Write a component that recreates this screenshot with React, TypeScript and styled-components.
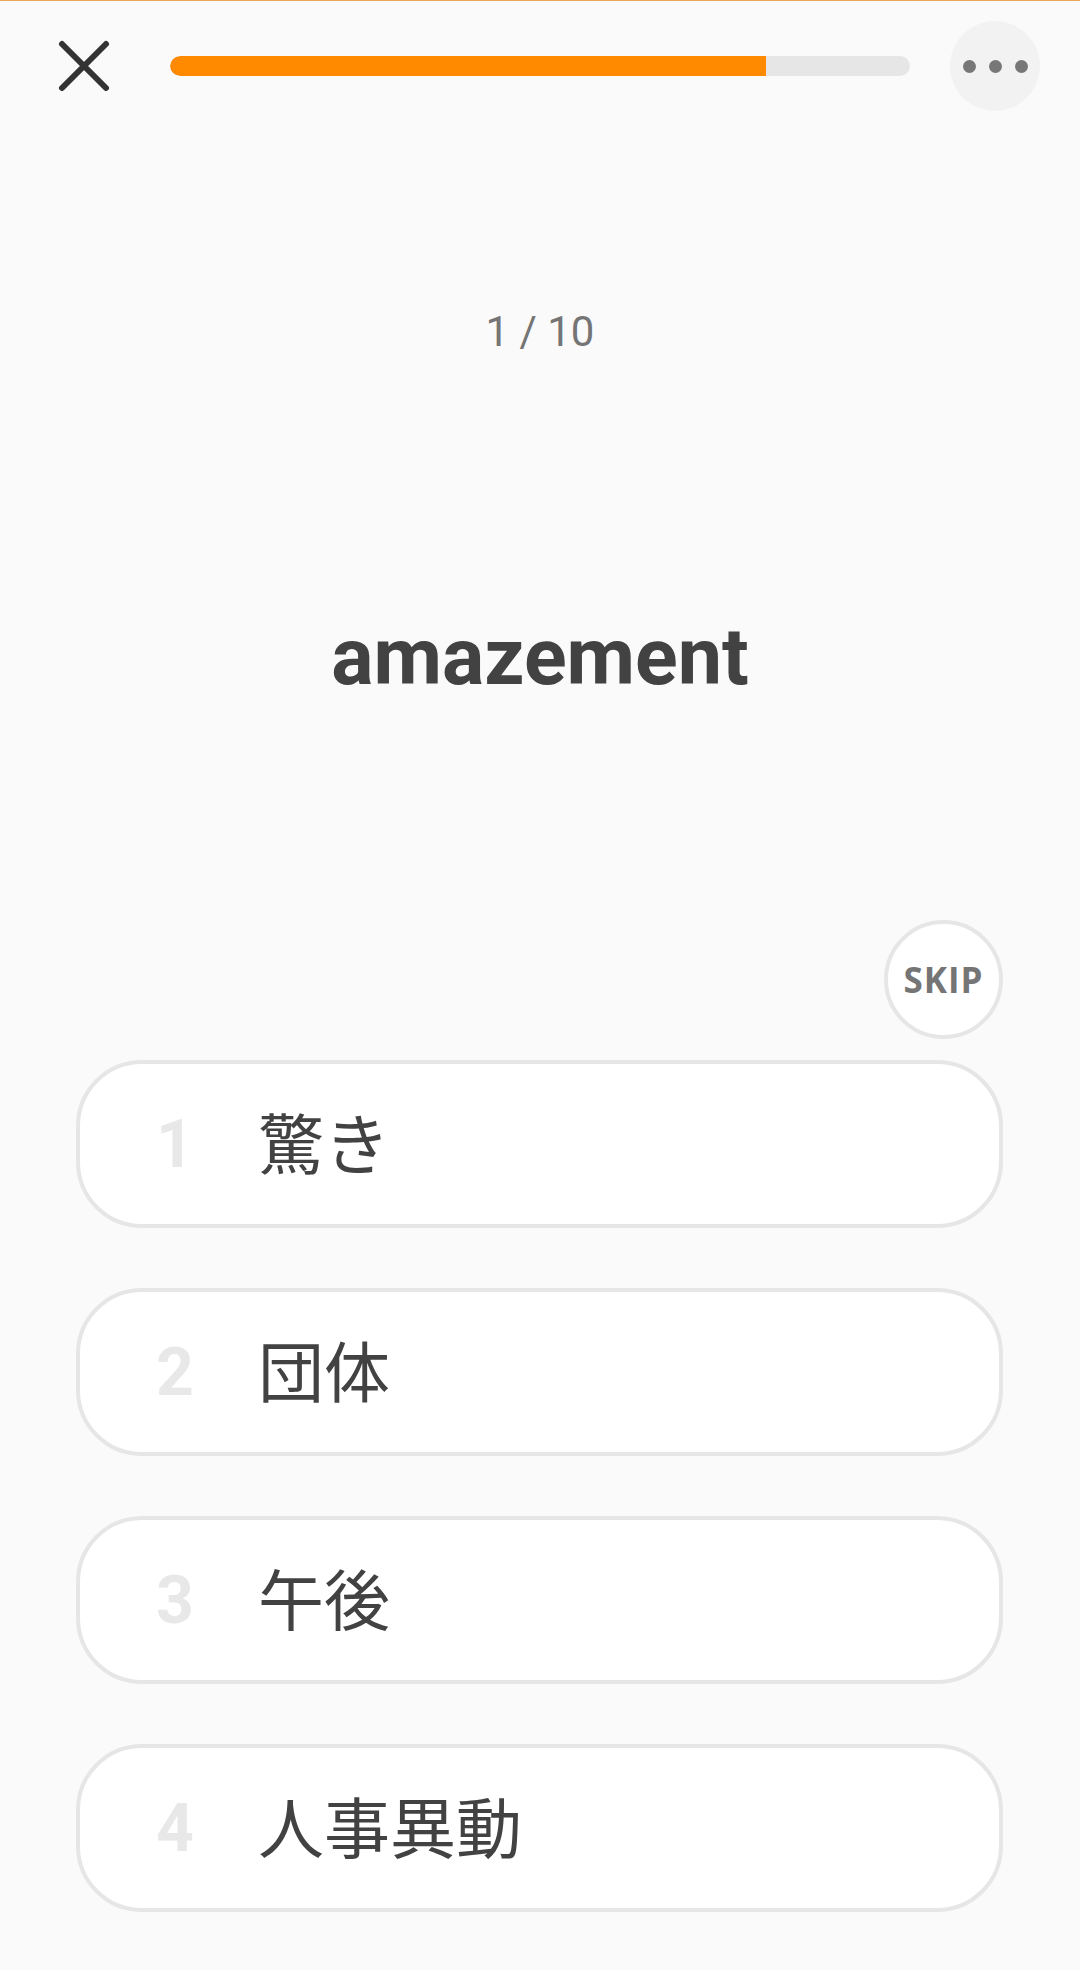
import React from 'react';
import styled, { createGlobalStyle } from 'styled-components';

const GlobalStyle = createGlobalStyle`
  html, body {
    margin: 0;
    padding: 0;
    background: #fafafa;
  }
  * {
    box-sizing: border-box;
  }
`;

const Screen = styled.div`
  width: 1080px;
  min-height: 1970px;
  background: #fafafa;
  border-top: 1px solid #eba65a;
  display: flex;
  flex-direction: column;
  font-family: Roboto, 'Noto Sans', sans-serif;
`;

const TopBar = styled.header`
  display: flex;
  align-items: center;
  padding: 20px 40px 0 58px;
  height: 110px;
`;

const CloseButton = styled.button`
  width: 52px;
  height: 52px;
  padding: 0;
  border: none;
  background: none;
  display: flex;
  align-items: center;
  justify-content: center;
  cursor: pointer;
`;

const Progress = styled.div`
  flex: 1;
  height: 20px;
  margin: 0 40px 0 60px;
  border-radius: 10px;
  background: #e6e6e6;
  overflow: hidden;
`;

const ProgressFill = styled.div`
  height: 100%;
  background: #ff8a00;
  border-radius: 10px 0 0 10px;
`;

const MoreButton = styled.button`
  width: 90px;
  height: 90px;
  border-radius: 50%;
  border: none;
  background: #f2f2f2;
  display: flex;
  align-items: center;
  justify-content: center;
  gap: 13px;
  padding: 0;
`;

const Dot = styled.span`
  width: 13px;
  height: 13px;
  border-radius: 50%;
  background: #777777;
`;

const Counter = styled.div`
  margin-top: 196px;
  text-align: center;
  font-size: 42px;
  line-height: 50px;
  color: #757575;
`;

const Word = styled.h1`
  margin: 254px 0 0;
  text-align: center;
  font-size: 79px;
  line-height: 92px;
  font-weight: 700;
  color: #424242;
`;

const SkipRow = styled.div`
  display: flex;
  justify-content: flex-end;
  padding: 0 77px;
  margin-top: 217px;
`;

const SkipButton = styled.button`
  width: 119px;
  height: 119px;
  border-radius: 50%;
  border: 4px solid #e6e6e6;
  background: #ffffff;
  color: #757575;
  font-family: 'Open Sans', Lato, sans-serif;
  font-weight: 700;
  font-size: 35px;
  letter-spacing: 1px;
  padding: 0;
  display: flex;
  align-items: center;
  justify-content: center;
`;

const Choices = styled.div`
  display: flex;
  flex-direction: column;
  gap: 60px;
  padding: 0 77px 0 76px;
  margin-top: 21px;
`;

const Choice = styled.button`
  height: 168px;
  border: 4px solid #e6e6e6;
  border-radius: 66px;
  background: #ffffff;
  display: flex;
  align-items: center;
  padding: 0 0 0 60px;
  text-align: left;
`;

const ChoiceNumber = styled.span`
  width: 70px;
  text-align: center;
  font-family: Roboto, sans-serif;
  font-weight: 700;
  font-size: 66px;
  color: #e8e8e8;
`;

const ChoiceText = styled.span`
  margin: 0 0 8px 48px;
  font-family: 'Noto Sans CJK JP', 'Noto Sans', sans-serif;
  font-size: 66px;
  line-height: 90px;
  font-weight: 400;
  color: #424242;
`;

const choices = ['驚き', '団体', '午後', '人事異動'];

const App: React.FC = () => {
  const progress = 0.805;

  return (
    <React.Fragment>
      <GlobalStyle />
      <Screen>
        <TopBar>
          <CloseButton aria-label='close'>
            <svg width='52' height='52' viewBox='0 0 52 52'>
              <path
                d='M4 4 L48 48 M48 4 L4 48'
                stroke='#333333'
                strokeWidth='6'
                strokeLinecap='round'
              />
            </svg>
          </CloseButton>
          <Progress>
            <ProgressFill style={{ width: `${progress * 100}%` }} />
          </Progress>
          <MoreButton aria-label='more'>
            <Dot />
            <Dot />
            <Dot />
          </MoreButton>
        </TopBar>

        <Counter>1 / 10</Counter>
        <Word>amazement</Word>

        <SkipRow>
          <SkipButton>SKIP</SkipButton>
        </SkipRow>

        {/* Answer options */}
        <Choices>
          {choices.map((text, i) => (
            <Choice key={text}>
              <ChoiceNumber>{i + 1}</ChoiceNumber>
              <ChoiceText>{text}</ChoiceText>
            </Choice>
          ))}
        </Choices>
      </Screen>
    </React.Fragment>
  );
};

export default App;
